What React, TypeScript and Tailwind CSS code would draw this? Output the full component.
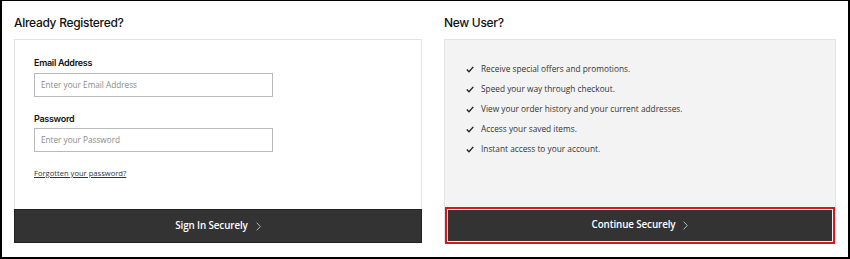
import React from "react";

const Chevron = () => (
  <svg width="5" height="9" viewBox="0 0 5 9" className="ml-[8px]" fill="none">
    <path d="M0.7 0.7l3.6 3.8-3.6 3.8" stroke="#b5b5b5" strokeWidth="1" />
  </svg>
);

const Check = () => (
  <svg width="8" height="7" viewBox="0 0 8 7" fill="none" className="shrink-0">
    <path d="M0.8 3.6l2.2 2.2L7.3 0.9" stroke="#222" strokeWidth="1.4" />
  </svg>
);

const items = [
  "Receive special offers and promotions.",
  "Speed your way through checkout.",
  "View your order history and your current addresses.",
  "Access your saved items.",
  "Instant access to your account.",
];

const heading = { fontFamily: 'Inter, sans-serif' };

export default function App() {
  return (
    <div className="w-[850px] h-[259px] bg-white border-l-2 border-r-2 border-t border-b-2 border-black box-border pl-[12px] pr-[12px] flex gap-[22px] text-[#222]" style={{ fontFamily: '"Open Sans", sans-serif' }}>
      <div className="w-[408px] flex flex-col">
        <h2 className="h-[38px] pt-[14px] text-[12px] leading-[15px] font-medium tracking-[-0.3px] text-[#111]" style={heading}>Already Registered?</h2>
        <div className="h-[204px] border border-[#e3e3e3] flex flex-col">
          <div className="flex-1 pl-[19px] pt-[17px]">
            <label className="block text-[9px] leading-[12px] font-semibold tracking-[-0.3px] text-[#111]" style={heading}>Email Address</label>
            <div className="mt-[4px] w-[239px] h-[24px] border border-[#b9b9b9] flex items-center pl-[6px] text-[8.2px] text-[#8a8a8a]">Enter your Email Address</div>
            <label className="block mt-[16px] text-[9px] leading-[12px] font-semibold tracking-[-0.3px] text-[#111]" style={heading}>Password</label>
            <div className="mt-[3px] w-[239px] h-[24px] border border-[#b9b9b9] flex items-center pl-[6px] text-[8.2px] text-[#8a8a8a]">Enter your Password</div>
            <a className="block mt-[15px] text-[7.6px] leading-[12px] underline text-[#333]">Forgotten your password?</a>
          </div>
          <div className="mx-[-1px] mb-[-1px] h-[34px] bg-[#333] border border-[#222] flex items-center justify-center text-white text-[9.8px] font-semibold tracking-[-0.1px]">
            Sign In Securely <Chevron />
          </div>
        </div>
      </div>
      <div className="w-[392px] flex flex-col">
        <h2 className="h-[38px] pt-[14px] text-[12px] leading-[15px] font-medium tracking-[-0.3px] text-[#111]" style={heading}>New User?</h2>
        <div className="h-[204px] border border-[#e3e3e3] bg-[#f3f3f3] flex flex-col">
          <ul className="flex-1 pl-[21px] pt-[22px] flex flex-col gap-[6px]">
            {items.map((t) => (
              <li key={t} className="flex items-center gap-[7px] h-[14px] text-[8.3px] text-[#333]">
                <Check />
                <span>{t}</span>
              </li>
            ))}
          </ul>
          <div className="mb-[-2px] h-[37px] border-2 border-[#d9161c] p-[1px] flex">
            <div className="flex-1 bg-[#333] flex items-center justify-center text-white text-[9.8px] font-semibold tracking-[-0.1px]">
              Continue Securely <Chevron />
            </div>
          </div>
        </div>
      </div>
    </div>
  );
}
